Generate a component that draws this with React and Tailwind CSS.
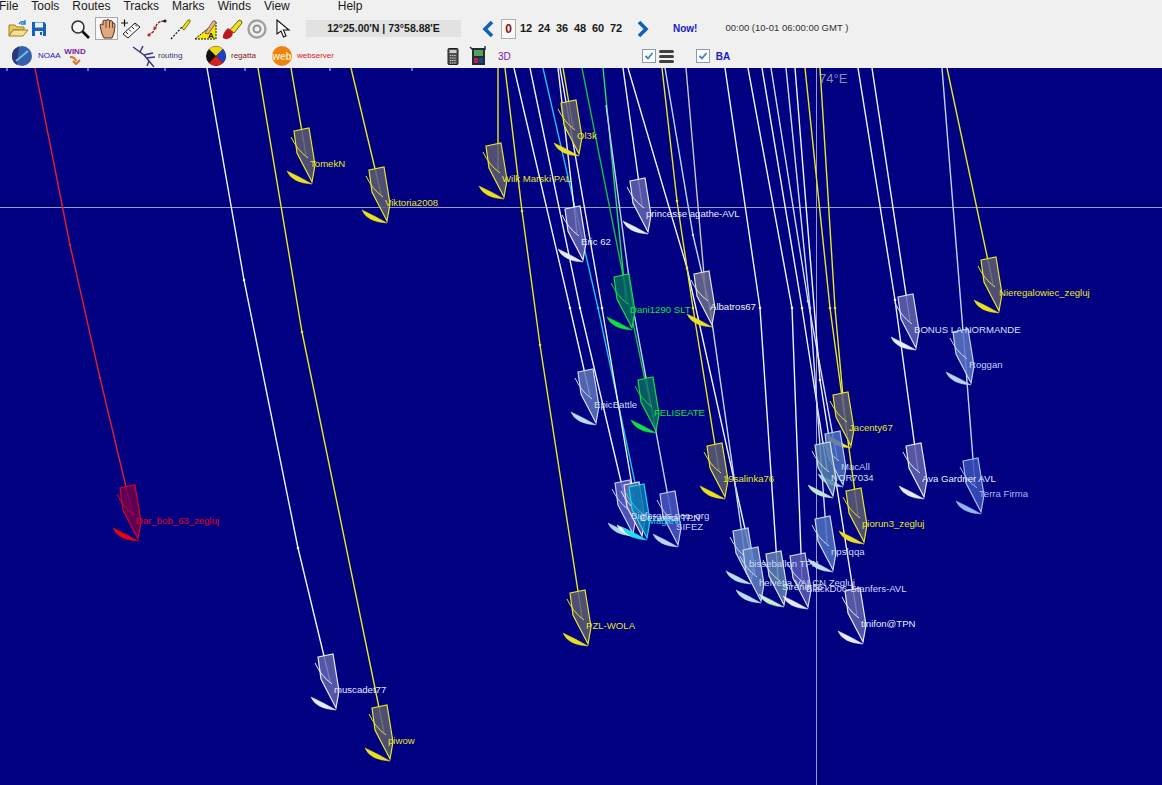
import React from "react";

const W = "#e8ecff";
const boats = [
  { name: "TomekN", a: [306, 155], c: "#e8e820", fill: "#5c5c74", sail: "#e8e020" },
  { name: "Viktoria2008", a: [381, 194], c: "#e8e820", fill: "#5c5c74", sail: "#e8e020" },
  { name: "Wilk Marski PAL", a: [498, 170], c: "#e8e820", fill: "#5c5c74", sail: "#e8e020" },
  { name: "Ol3k", a: [573, 127], c: "#e8e820", fill: "#5c5c74", sail: "#e8e020" },
  { name: "Nieregalowiec_zegluj", a: [993, 284], c: "#e8e820", fill: "#5c5c74", sail: "#e8e020", lx: 999 },
  { name: "Jacenty67", a: [845, 419], c: "#e8e820", fill: "#5c5c74", sail: "#e8e020" },
  { name: "piorun3_zegluj", a: [858, 515], c: "#e8e820", fill: "#5c5c74", sail: "#e8e020" },
  { name: "19salinka76", a: [719, 470], c: "#e8e820", fill: "#5c5c74", sail: "#e8e020" },
  { name: "PZL-WOLA", a: [582, 617], c: "#e8e820", fill: "#5c5c74", sail: "#e8e020" },
  { name: "piwow", a: [384, 732], c: "#e8e820", fill: "#5c5c74", sail: "#e8e020" },
  { name: "Albatros67", a: [706, 298], c: "#dfe4d8", fill: "#6c6c8c", sail: "#e8e020", text: "#f4f4e8" },
  { name: "Dar_bob_63_zegluj", a: [132, 512], c: "#e00020", fill: "#700050", sail: "#f00010" },
  { name: "muscadet77", a: [330, 681], c: W, fill: "#6464ac", sail: "#e8ecff" },
  { name: "princesse agathe-AVL", a: [642, 205], c: W, fill: "#6464ac", sail: "#e8ecff" },
  { name: "Eric 62", a: [577, 233], c: W, fill: "#6464ac", sail: "#e8ecff" },
  { name: "Dani1290 SLT", a: [626, 301], c: "#10e040", fill: "#086a60", sail: "#10e040" },
  { name: "FELISEATE", a: [650, 404], c: "#10e040", fill: "#086a60", sail: "#10e040" },
  { name: "EpicBattle", a: [590, 396], c: "#c8dcf8", fill: "#6076b8", sail: "#b8dcf0" },
  { name: "BONUS LA NORMANDE", a: [910, 321], c: "#d8e0ff", fill: "#6464ac", sail: "#e8ecff" },
  { name: "Roggan", a: [965, 356], c: "#c0d4f8", fill: "#5c74c4", sail: "#b8d4f4" },
  { name: "Terra Firma", a: [975, 485], c: "#a4bcf4", fill: "#3c50bc", sail: "#90b8f0", text: "#a4bcf4" },
  { name: "Ava Gardner AVL", a: [918, 470], c: W, fill: "#6464ac", sail: "#e8ecff" },
  { name: "MacAll", a: [837, 458], c: "#b8d4f4", fill: "#5070c0", sail: "#a8d8f0" },
  { name: "NOR7034", a: [827, 469], c: "#c8e4e0", fill: "#5880b0", sail: "#c0e8d8" },
  { name: "npslqqa", a: [827, 543], c: "#c8dcf8", fill: "#5070c0", sail: "#c0e0f8" },
  { name: "tinifon@TPN", a: [857, 615], c: W, fill: "#6464ac", sail: "#e8ecff" },
  { name: "Bigfergus-pco_org", a: [627, 507], c: "#c8d4ff", fill: "#5a60c0", sail: "#a8d8f4" },
  { name: "Cezanna TPN", a: [636, 509], c: W, fill: "#6464ac", sail: "#f0f4ff" },
  { name: "Maglev", a: [641, 511], c: "#20d8f0", fill: "#0878b0", sail: "#20e0f0", lx: 648, ly: 520 },
  { name: "SIFEZ", a: [672, 518], c: "#c0d0ff", fill: "#4a58c0", sail: "#b8d4f8" },
  { name: "bisseballon TPN", a: [745, 555], c: "#c8dcf8", fill: "#6080c0", sail: "#b8e0f0" },
  { name: "helvetia VALCN Zegluj", a: [755, 574], c: "#c8dcf8", fill: "#6080c0", sail: "#b8e0f0" },
  { name: "Sirene 56", a: [778, 578], c: "#d0e8e0", fill: "#6080b0", sail: "#c8f0d0" },
  { name: "BlackD06-Stanfers-AVL", a: [802, 580], c: "#d8d8ff", fill: "#5a5ab4", sail: "#e8e8ff" },
];

const tracks = [
  ["#e02030", [[35, 68], [70, 245], [100, 378], [132, 512]]],
  ["#f0f4ff", [[207, 68], [244, 280], [298, 548], [330, 681]]],
  ["#e8e820", [[258, 68], [302, 332], [384, 732]]],
  ["#e8e820", [[291, 68], [306, 155]]],
  ["#e8e820", [[351, 68], [381, 194]]],
  ["#e8e820", [[498, 68], [498, 170]]],
  ["#e8e820", [[505, 68], [522, 211], [540, 345], [582, 617]]],
  ["#f0f4ff", [[514, 68], [570, 308], [590, 396]]],
  ["#f0f4ff", [[530, 68], [580, 308], [627, 507]]],
  ["#20c0f0", [[543, 68], [598, 308], [641, 511]]],
  ["#f0f4ff", [[558, 68], [577, 233]]],
  ["#f0f4ff", [[560, 68], [602, 308], [636, 509]]],
  ["#e8e820", [[563, 68], [573, 127]]],
  ["#10c040", [[582, 68], [623, 275], [650, 404]]],
  ["#20e060", [[603, 68], [626, 301]]],
  ["#c0d0ff", [[606, 105], [633, 308], [672, 518]]],
  ["#f0f4ff", [[623, 68], [642, 205]]],
  ["#f0f4ff", [[628, 68], [687, 268], [755, 574]]],
  ["#e8e820", [[662, 68], [677, 201], [693, 308], [719, 470]]],
  ["#b8dcf8", [[665, 68], [693, 235], [710, 308], [745, 555]]],
  ["#c8c8c0", [[686, 68], [706, 298]]],
  ["#f0f4ff", [[725, 68], [760, 308], [778, 578]]],
  ["#f0f4ff", [[748, 68], [792, 308], [802, 580]]],
  ["#f0f4ff", [[762, 68], [802, 308], [827, 469]]],
  ["#d0dcff", [[771, 68], [808, 301], [837, 458]]],
  ["#d0dcff", [[786, 68], [810, 308], [827, 543]]],
  ["#f0f4ff", [[795, 68], [820, 380], [857, 615]]],
  ["#e8e820", [[805, 68], [830, 308], [858, 515]]],
  ["#e8e820", [[820, 68], [835, 308], [845, 419]]],
  ["#f0f4ff", [[858, 68], [895, 300], [918, 470]]],
  ["#f0f4ff", [[872, 68], [910, 321]]],
  ["#c0d4f8", [[942, 68], [965, 356], [975, 485]]],
  ["#e8e820", [[947, 68], [993, 284]]],
];

const Boat = ({ b }) => (
  <g transform={`translate(${b.a[0]} ${b.a[1] - 68})`}>
    <path d="M-12,-24 L3,-27 L9,10 L6,27 L-9,-2 Z" fill={b.fill} fillOpacity="0.85" stroke={b.c} strokeWidth="1.2" />
    <path d="M-15,-18 Q-9,-5 2,3" fill="none" stroke={b.c} strokeWidth="1" />
    <path d="M-19,16 Q-14,28 6,29 Q-6,22 -19,16 Z" fill={b.sail} stroke={b.sail} strokeWidth="0.5" />
  </g>
);

const Chart = () => (
  <svg width="1162" height="717" className="block font-['Liberation_Sans',sans-serif]">
    <line x1="0" y1="139.5" x2="1162" y2="139.5" stroke="#9a9ab0" />
    <line x1="816.5" y1="0" x2="816.5" y2="717" stroke="#9a9ab0" />
    {[7, 88, 165, 245, 330, 412].map((x) => (
      <line key={x} x1={x} y1="0" x2={x} y2="3" stroke="#d0d0e0" />
    ))}
    <text x="819" y="15" fontSize="13" fill="#8c8ca8">74°E</text>
    {tracks.map(([c, pts], i) => (
      <g key={i}>
        <polyline points={pts.map((p) => `${p[0]},${p[1] - 68}`).join(" ")} fill="none" stroke={c} strokeWidth="1.4" />
        {pts.slice(1, -1).map((p, j) => (
          <circle key={j} cx={p[0]} cy={p[1] - 68} r="1.3" fill={c} />
        ))}
      </g>
    ))}
    {boats.map((b) => (
      <Boat key={b.name} b={b} />
    ))}
    {boats.map((b) => (
      <text key={b.name} x={b.lx || b.a[0] + 4} y={(b.ly || b.a[1] + 8) - 68 + 3.5} fontSize="9.6" fill={b.text || b.c}>
        {b.name}
      </text>
    ))}
  </svg>
);

const Ico = ({ children, w = 22, h = 22, className = "" }) => (
  <svg width={w} height={h} viewBox={`0 0 ${w} ${h}`} className={"shrink-0 " + className}>
    {children}
  </svg>
);

const Check = ({ className }) => (
  <span className={"flex h-[14px] w-[14px] items-center justify-center border border-[#8a9ab0] bg-white " + className}>
    <svg width="10" height="10" viewBox="0 0 10 10">
      <path d="M1.5,5 L4,7.5 L8.5,2" fill="none" stroke="#3a80d0" strokeWidth="1.8" />
    </svg>
  </span>
);

const menus = ["File", "Tools", "Routes", "Tracks", "Marks", "Winds", "View"];
const hours = ["12", "24", "36", "48", "60", "72"];

export default function App() {
  return (
    <div className="flex h-[785px] w-[1162px] flex-col overflow-hidden bg-[#000080] font-['Liberation_Sans',sans-serif]">
      <div className="flex h-[68px] flex-col bg-[#f0f0f0]">
        <div className="-ml-[1px] flex h-[13px] items-center gap-[13px] text-xs leading-[13px] text-[#1a1a1a]">
          {menus.map((m) => (
            <span key={m}>{m}</span>
          ))}
          <span className="ml-[35px]">Help</span>
        </div>

        <div className="mt-[4px] flex h-[23px] items-center">
          <Ico className="ml-[7px]">
            <path d="M2,18 L2,7 L8,7 L10,9 L17,9 L17,12 L6,12 Z" fill="#e8c860" stroke="#a08020" />
            <path d="M2,18 L6,12 L21,12 L16,18 Z" fill="#f8e090" stroke="#a08020" />
            <path d="M12,6 Q15,2 18,5 M18,2 L18,6 L14,6" fill="none" stroke="#2080d0" strokeWidth="1.4" />
          </Ico>
          <Ico w={16} h={16} className="ml-[2px]">
            <path d="M1,1 H13 L15,3 V15 H1 Z" fill="#1860b8" />
            <rect x="4" y="1.5" width="8" height="5" fill="#e8f0f8" />
            <rect x="4" y="10" width="8" height="5" fill="#f0f0f0" />
            <rect x="9" y="11" width="2" height="3" fill="#1860b8" />
          </Ico>
          <Ico className="ml-[22px]">
            <circle cx="9" cy="9" r="6" fill="#f4f4f4" stroke="#303030" strokeWidth="1.6" />
            <path d="M13.5,13.5 L20,20" stroke="#101010" strokeWidth="2.6" />
          </Ico>
          <div className="ml-[4px] flex h-[23px] w-[23px] items-center justify-center border border-[#a8a8a8] bg-[#f8f8f8]">
            <Ico w={20} h={21}>
              <path d="M4,12 L3,7 Q4,5 6,7 L6,3 Q8,1 9,3 L10,1.5 Q12,1 12.5,3 L14,2.5 Q16,3 15.5,5 L17,5 Q18,6 18,8 L17,15 L15,20 L7,20 L5,16 Z" fill="#e0a880" stroke="#503020" strokeWidth="1" />
              <path d="M9,3 V10 M12.5,3 V10 M15.5,5 V10" stroke="#503020" strokeWidth="0.8" />
            </Ico>
          </div>
          <Ico className="ml-[2px]">
            <path d="M3,16 L15,5 L20,9 L8,20 Z" fill="#fafafa" stroke="#202020" />
            <path d="M6,14 L8,16 M9,11.5 L11,13.5 M12,9 L14,11 M15,6.5 L17,8.5" stroke="#202020" />
            <path d="M1,5 H8 M4.5,1.5 V8.5" stroke="#101010" strokeWidth="1.2" />
          </Ico>
          <Ico className="ml-[4px]">
            <path d="M2,17 L7,14 L10,8 Q12,3 19,3" fill="none" stroke="#701820" strokeWidth="1.3" strokeDasharray="3 1" />
            <circle cx="3" cy="17" r="1.6" fill="#d02020" />
            <circle cx="9" cy="10" r="1.6" fill="#d02020" />
            <circle cx="19" cy="3" r="1.6" fill="#202020" />
          </Ico>
          <Ico className="ml-[2px]">
            <path d="M1,21 L12,9" stroke="#101010" strokeWidth="1.2" strokeDasharray="2 1.5" />
            <path d="M12,10 L18,2 Q21,1 20,4 L14,12 Z" fill="#f4e020" stroke="#807010" />
          </Ico>
          <Ico w={27} className="ml-[2px]">
            <path d="M1,21 L22,4 V21 Z" fill="#f8e800" stroke="#101010" strokeDasharray="2 1" />
            <path d="M11,15 L19,3 Q22,2 22,5 L14,16 Z" fill="#e8b090" stroke="#806050" />
            <text x="14" y="20" fontSize="8" fontWeight="bold" fill="#101010">A</text>
          </Ico>
          <Ico>
            <path d="M9,12 L18,2 Q21,2 21,5 L13,15 Z" fill="#f0e020" stroke="#706010" />
            <path d="M7,10 Q1,16 2,20 Q7,23 11,18 Q12,15 12,14 Z" fill="#c01818" />
          </Ico>
          <Ico className="ml-[3px]">
            <circle cx="11" cy="11" r="8.5" fill="none" stroke="#a0a0a0" strokeWidth="2.4" />
            <circle cx="11" cy="11" r="3.5" fill="none" stroke="#909090" strokeWidth="2" />
          </Ico>
          <Ico w={16} h={20} className="ml-[7px]">
            <path d="M2,1 V15 L6,12 L8.5,18 L11,17 L8.5,11 L14,11 Z" fill="#fff" stroke="#101010" strokeWidth="1.1" />
          </Ico>
          <div className="ml-[15px] flex h-[17px] w-[155px] items-center justify-center bg-[#e2e2e2] text-[10.5px] font-bold text-[#1a1a1a]">
            12°25.00'N | 73°58.88'E
          </div>
          <Ico w={14} h={18} className="ml-[20px]">
            <path d="M11,2 L4,9 L11,16" fill="none" stroke="#1060b8" strokeWidth="3.6" />
          </Ico>
          <span className="ml-[6px] flex h-[20px] w-[15px] items-center justify-center border border-[#b0b0b0] bg-[#f8f8f8] text-xs font-bold text-[#901010]">
            0
          </span>
          <div className="ml-[1px] flex w-[110px] text-[11px] font-bold text-[#1a1a1a]">
            {hours.map((h) => (
              <span key={h} className="w-[18px] text-center">{h}</span>
            ))}
          </div>
          <Ico w={14} h={18} className="ml-[9px]">
            <path d="M3,2 L10,9 L3,16" fill="none" stroke="#1060b8" strokeWidth="3.6" />
          </Ico>
          <span className="ml-[23px] text-[10px] font-bold text-[#1818c8]">Now!</span>
          <span className="ml-[28px] text-[9.5px] text-[#303030]">00:00 (10-01 06:00:00 GMT )</span>
        </div>

        <div className="mt-[4px] flex h-[24px] items-center">
          <Ico className="ml-[11px]">
            <circle cx="11" cy="11" r="10" fill="#3860a8" />
            <path d="M1,11 A10,10 0 0 1 8,1.5 L6,20 A10,10 0 0 1 1,11" fill="#283878" />
            <path d="M5,16 L17,6" stroke="#70b8f0" strokeWidth="2" />
          </Ico>
          <span className="ml-[5px] w-[22px] text-[8px] text-[#2020c0]">NOAA</span>
          <div className="ml-[6px] flex w-[18px] flex-col items-center">
            <span className="text-[8px] font-bold leading-[9px] text-[#8020a0]">WIND</span>
            <svg width="12" height="9" viewBox="0 0 12 9">
              <path d="M1,1 Q6,1 7,5 M4,5 L7,8 L11,4" fill="none" stroke="#e07020" strokeWidth="2" />
            </svg>
          </div>
          <Ico w={24} h={24} className="ml-[48px]">
            <path d="M1,3 L12,11 L22,23 M12,11 L21,9 M14,14 L23,13 M8,8 L11,2 M17,17 L15,22" fill="none" stroke="#383880" strokeWidth="1.5" />
          </Ico>
          <span className="ml-[2px] w-[24px] text-[8px] text-[#303880]">routing</span>
          <Ico className="ml-[23px]">
            <circle cx="11" cy="11" r="10" fill="#101010" />
            <path d="M11,11 L4,4 A10,10 0 0 1 18,4 Z" fill="#f0d810" />
            <path d="M11,11 L18,4 A10,10 0 0 1 18,18 Z" fill="#2040c0" />
            <path d="M11,11 L18,18 A10,10 0 0 1 4,18 Z" fill="#d82020" />
          </Ico>
          <span className="ml-[4px] w-[24px] text-[8px] text-[#801828]">regatta</span>
          <div className="ml-[17px] flex h-[20px] w-[20px] items-center justify-center rounded-full bg-[#f08010] text-[10px] font-bold text-[#f8e8b0]">
            web
          </div>
          <span className="ml-[5px] w-[36px] text-[8px] text-[#e01818]">webserver</span>
          <Ico w={12} h={17} className="ml-[114px]">
            <rect x="1" y="0.5" width="10" height="16" rx="1" fill="#505050" stroke="#202020" />
            <rect x="2.5" y="2" width="7" height="3" fill="#c8d0c8" />
            <path d="M3,7.5 H9 M3,10 H9 M3,12.5 H9 M3,15 H9" stroke="#e0e0e0" strokeDasharray="1.2 1" />
          </Ico>
          <Ico w={18} h={20} className="ml-[10px]">
            <rect x="3" y="2" width="13" height="17" fill="#203028" />
            <rect x="5" y="4" width="9" height="6" fill="#50a068" />
            <rect x="5" y="12" width="4" height="5" fill="#c02050" />
            <rect x="10" y="12" width="4" height="5" fill="#2040a0" />
            <path d="M1,1 L4,4 M16,0 V4" stroke="#203028" strokeWidth="1.4" />
          </Ico>
          <span className="ml-[11px] text-[10px] text-[#8018a0]">3D</span>
          <Check className="ml-[131px]" />
          <div className="ml-[3px] flex w-[15px] flex-col gap-[2px]">
            <span className="h-[3px] rounded-sm bg-[#404040]" />
            <span className="h-[3px] rounded-sm bg-[#404040]" />
            <span className="h-[3px] rounded-sm bg-[#404040]" />
          </div>
          <Check className="ml-[22px]" />
          <span className="ml-[6px] text-[10px] font-bold text-[#2020c0]">BA</span>
        </div>
      </div>
      <Chart />
    </div>
  );
}
